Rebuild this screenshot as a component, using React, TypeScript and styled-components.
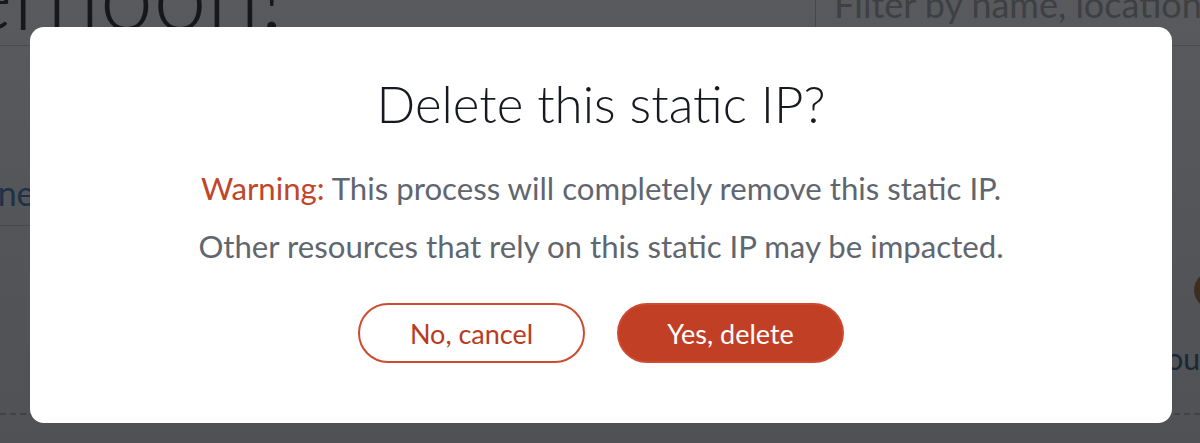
import React from "react";
import styled, { createGlobalStyle } from "styled-components";

const Global = createGlobalStyle`
  html, body { margin: 0; padding: 0; }
  body { width: 1200px; height: 443px; overflow: hidden; background: #ffffff; font-family: Lato, "Liberation Sans", sans-serif; }
`;

const Page = styled.div`
  position: relative;
  width: 1200px;
  height: 443px;
  overflow: hidden;
  background: #ffffff;
`;

const Backdrop = styled.div`
  display: grid;
  grid-template-rows: 46px 1fr;
  height: 100%;
`;

const Header = styled.div`
  display: flex;
  justify-content: space-between;
  align-items: flex-end;
  border-bottom: 1px solid #c8c8c8;
`;

const PageTitle = styled.h1`
  margin: 0 0 0 -402px;
  font-family: Lato, sans-serif;
  font-weight: 300;
  font-size: 96px;
  line-height: 1;
  color: #000;
  white-space: nowrap;
  transform: translateY(-4px);
`;

const FilterBox = styled.div`
  width: 385px;
  height: 100%;
  flex-shrink: 0;
  border-left: 1px solid #bcbcbc;
  padding: 0 0 0 18px;
  box-sizing: border-box;
  font-size: 36px;
  color: #9a9a9a;
  line-height: 1;
  white-space: nowrap;
  overflow: hidden;
  transform: translateY(-14px);
`;

const Body = styled.div`
  display: grid;
  grid-template-columns: 1fr 1fr;
  padding-top: 126px;
`;

const TabLabel = styled.div`
  font-size: 34px;
  color: #1d66b8;
  margin-left: -100px;
  padding-bottom: 12px;
  border-bottom: 1px solid #c8c8c8;
  white-space: nowrap;
`;

const RightCol = styled.div`
  display: flex;
  flex-direction: column;
  align-items: flex-end;
  padding-top: 98px;
`;

const Avatar = styled.div`
  width: 44px;
  height: 40px;
  border-radius: 50%;
  background: #a85a18;
  margin-right: -38px;
`;

const Owner = styled.div`
  margin-top: 30px;
  margin-right: 0;
  font-size: 30px;
  color: #0e3f72;
  white-space: nowrap;
`;

const Dashed = styled.div`
  position: absolute;
  left: 0;
  right: 0;
  top: 413px;
  border-top: 2px dashed #b8b8b8;
`;

const Overlay = styled.div`
  position: absolute;
  inset: 0;
  background: linear-gradient(180deg, rgba(30, 32, 36, 0.74) 0%, rgba(30, 32, 36, 0.78) 100%);
  display: flex;
  align-items: flex-start;
  justify-content: center;
  padding-top: 27px;
`;

const Modal = styled.div`
  width: 1142px;
  height: 396px;
  margin-left: 2px;
  box-sizing: border-box;
  background: #ffffff;
  border-radius: 14px;
  display: flex;
  flex-direction: column;
  align-items: center;
  padding-top: 51px;
`;

const Title = styled.h2`
  margin: 0;
  font-family: Lato, sans-serif;
  font-weight: 300;
  font-size: 51px;
  line-height: 1;
  color: #16191f;
`;

const Message = styled.p<{ $first?: boolean }>`
  margin: ${(p) => (p.$first ? "39px" : "17px")} 0 0;
  font-size: 31.2px;
  line-height: 1.3;
  color: #5f6670;
  white-space: nowrap;
`;

const Warn = styled.span`
  color: #c0462a;
`;

const Actions = styled.div`
  display: flex;
  gap: 32px;
  margin-top: 37px;
`;

const Button = styled.button<{ $primary?: boolean }>`
  width: 227px;
  height: 60px;
  border-radius: 30px;
  font-family: Lato, sans-serif;
  font-size: 27px;
  cursor: pointer;
  border: 2px solid #cd4b30;
  background: ${(p) => (p.$primary ? "#c13f25" : "#ffffff")};
  color: ${(p) => (p.$primary ? "#ffffff" : "#b83b22")};
`;

export default function App() {
  return (
    <Page>
      <Global />
      <Backdrop>
        <Header>
          <PageTitle>Good afternoon!</PageTitle>
          <FilterBox>Filter by name, location, tag</FilterBox>
        </Header>
        <Body>
          <div>
            <TabLabel>Containers</TabLabel>
          </div>
          <RightCol>
            <Avatar />
            <Owner>You</Owner>
          </RightCol>
        </Body>
      </Backdrop>
      <Dashed />
      <Overlay>
        <Modal role="dialog">
          <Title>Delete this static IP?</Title>
          <Message $first>
            <Warn>Warning:</Warn> This process will completely remove this static IP.
          </Message>
          <Message>Other resources that rely on this static IP may be impacted.</Message>
          <Actions>
            <Button>No, cancel</Button>
            <Button $primary>Yes, delete</Button>
          </Actions>
        </Modal>
      </Overlay>
    </Page>
  );
}
